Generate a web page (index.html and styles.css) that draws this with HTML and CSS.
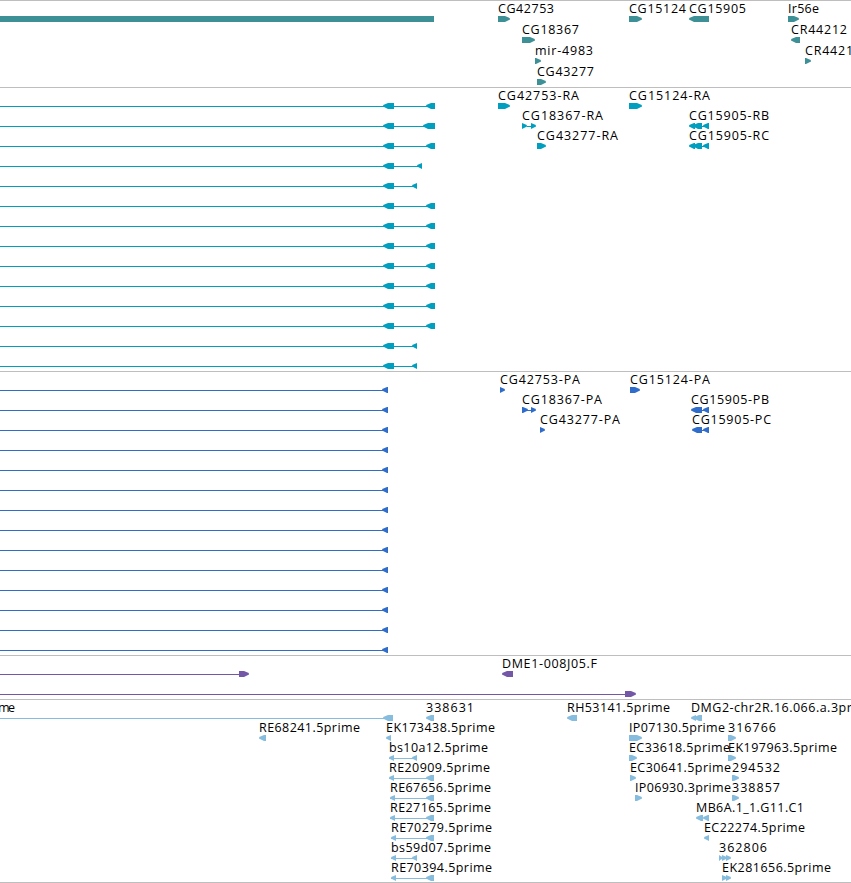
FILE: index.html
```html
<!DOCTYPE html>
<html lang="en">
<head>
<meta charset="utf-8">
<title>Genome browser</title>
<link rel="stylesheet" href="styles.css">
</head>
<body>
<main class="browser">
<section class="track genes"></section>
<section class="track transcripts"></section>
<section class="track proteins"></section>
<section class="track clones"></section>
<section class="track ests"></section>
</main>
<script src="tracks.js"></script>
</body>
</html>
```
FILE: styles.css
```css
body {
  margin: 0;
  background: #fff;
}
.browser {
  display: flex;
  flex-direction: column;
  width: 851px;
  border-bottom: 1px solid #bebebe;
  overflow: hidden;
}
.track {
  box-sizing: border-box;
  border-top: 1px solid #bebebe;
  overflow: hidden;
}
.track svg {
  display: block;
  width: 851px;
  height: 100%;
}
.genes { height: 87px; color: #3d9095; }
.transcripts { height: 284px; color: #009ebf; }
.proteins { height: 284px; color: #306dca; }
.clones { height: 44px; color: #7557a7; }
.ests { height: 183px; color: #86bcdd; }
.feature {
  fill: currentColor;
}
.label {
  fill: #000;
  font: 12.5px "Open Sans", "Noto Sans", sans-serif;
}
```
FILE: tracks.js
```js
// Labels: [row, x, width, text]. Glyphs: [row, start, end, direction].
// Directions: L and R are strand arrows, B is a plain bar, I is an intron line.
const tracks = {
  genes: {
    pitch: 21,
    labels: [[0,498,56,'CG42753'],[0,629,57,'CG15124'],[0,689,57,'CG15905'],[0,788,31,'Ir56e'],
      [1,522,57,'CG18367'],[1,791,56,'CR44212'],[2,535,58,'mir-4983'],[2,805,56,'CR44213'],[3,537,57,'CG43277']],
    glyphs: [[0,0,434,'B'],[0,498,510,'R'],[0,629,642,'R'],[0,689,709,'L'],[0,788,799,'R'],
      [1,522,535,'R'],[1,791,800,'L'],[2,535,541,'R'],[2,805,811,'R'],[3,537,546,'R']]
  },
  transcripts: {
    pitch: 20,
    labels: [[0,498,81,'CG42753-RA'],[0,629,81,'CG15124-RA'],[1,522,81,'CG18367-RA'],[1,689,80,'CG15905-RB'],
      [2,537,81,'CG43277-RA'],[2,689,80,'CG15905-RC']],
    glyphs: [[0,498,510,'R'],[0,629,642,'R'],[1,522,527,'R'],[1,527,531,'I'],[1,531,536,'R'],[2,537,546,'R']]
  },
  proteins: {
    pitch: 20,
    labels: [[0,500,80,'CG42753-PA'],[0,630,80,'CG15124-PA'],[1,522,80,'CG18367-PA'],[1,691,78,'CG15905-PB'],
      [2,540,80,'CG43277-PA'],[2,692,79,'CG15905-PC']],
    glyphs: [[0,500,505,'R'],[0,630,640,'R'],[1,522,528,'R'],[1,527,531,'I'],[1,531,536,'R'],[2,540,545,'R'],
      [1,691,702,'L'],[2,692,702,'L']]
  },
  clones: {
    pitch: 20,
    labels: [[0,502,95,'DME1-008J05.F']],
    glyphs: [[0,0,240,'I'],[0,239,249,'R'],[0,502,513,'L'],[1,0,626,'I'],[1,625,636,'R']]
  },
  ests: {
    pitch: 20,
    labels: [[0,-2,17,'me'],[0,426,48,'338631'],[0,567,103,'RH53141.5prime'],[0,691,184,'DMG2-chr2R.16.066.a.3prime'],
      [1,259,101,'RE68241.5prime'],[1,386,109,'EK173438.5prime'],[1,629,96,'IP07130.5prime'],[1,728,48,'316766'],
      [2,389,99,'bs10a12.5prime'],[2,629,101,'EC33618.5prime'],[2,728,109,'EK197963.5prime'],
      [3,389,101,'RE20909.5prime'],[3,630,101,'EC30641.5prime'],[3,732,48,'294532'],
      [4,390,101,'RE67656.5prime'],[4,635,96,'IP06930.3prime'],[4,732,48,'338857'],
      [5,390,101,'RE27165.5prime'],[5,696,108,'MB6A.1_1.G11.C1'],
      [6,391,101,'RE70279.5prime'],[6,704,101,'EC22274.5prime'],
      [7,391,100,'bs59d07.5prime'],[7,719,48,'362806'],
      [8,391,101,'RE70394.5prime'],[8,722,109,'EK281656.5prime']],
    glyphs: [[0,0,388,'I'],[0,383,393,'L'],[0,426,434,'L'],[0,567,577,'L'],[0,691,696,'L'],[0,694,702,'L'],
      [1,259,266,'L'],[1,386,391,'L'],[1,629,642,'R'],[1,728,736,'R'],[2,629,637,'R'],[2,728,736,'R'],
      [3,630,636,'R'],[3,732,739,'R'],[4,635,642,'R'],[4,732,739,'R'],[5,696,703,'L'],[5,703,709,'L'],
      [6,704,709,'L'],[7,719,723,'R'],[7,722,727,'R'],[7,726,731,'R'],[8,722,727,'R'],[8,726,731,'R']]
  }
};

const firstExons = [426,423,426,417,412,426,426,426,426,426,426,426,412,412];
firstExons.forEach((start, row) => {
  const end = start > 420 ? 435 : start + 5;
  tracks.transcripts.glyphs.push([row,0,end,'I'],[row,383,394,'L'],[row,start,end,'L']);
  tracks.proteins.glyphs.push([row,0,384,'I'],[row,382,388,'L']);
});
for (const row of [1, 2]) {
  tracks.transcripts.glyphs.push([row,689,695,'L'],[row,693,702,'L'],[row,702,704,'I'],[row,703,709,'L']);
  tracks.proteins.glyphs.push([row,702,704,'I'],[row,703,709,'L']);
}
[[2,389,417],[3,389,434],[4,390,434],[5,390,434],[6,391,434],[7,391,417],[8,391,434]].forEach(([row, a, b]) => {
  tracks.ests.glyphs.push([row,a,b,'I'],[row,a,a+5,'L'],[row,b-(b > 420 ? 8 : 5),b,'L']);
});

function glyph([row, a, b, kind], pitch) {
  const y = row * pitch;
  if (kind === 'I') return `<rect class="feature" x="${a}" y="${y + 18}" width="${b - a}" height="1"/>`;
  if (kind === 'B') return `<rect class="feature" x="${a}" y="${y + 15}" width="${b - a}" height="6"/>`;
  const tip = kind === 'L' ? a : b;
  const back = kind === 'L' ? b : a;
  const dir = kind === 'L' ? 1 : -1;
  const head = Math.min(5, b - a);
  const points = [[tip, 17.4], [tip + dir * 2, 16.2], [tip + dir * head, 15], [back, 15],
    [back, 21], [tip + dir * head, 21], [tip + dir * 2, 19.6], [tip, 18.6]];
  return `<polygon class="feature" points="${points.map(p => p[0] + ',' + (y + p[1])).join(' ')}"/>`;
}

for (const [name, track] of Object.entries(tracks)) {
  const shapes = track.glyphs.map(g => glyph(g, track.pitch)).join('');
  const labels = track.labels.map(([row, x, width, text]) =>
    `<text class="label" x="${x}" y="${row * track.pitch + 12}" textLength="${width}">${text}</text>`).join('');
  document.querySelector('.' + name).innerHTML = `<svg>${shapes}${labels}</svg>`;
}
```
